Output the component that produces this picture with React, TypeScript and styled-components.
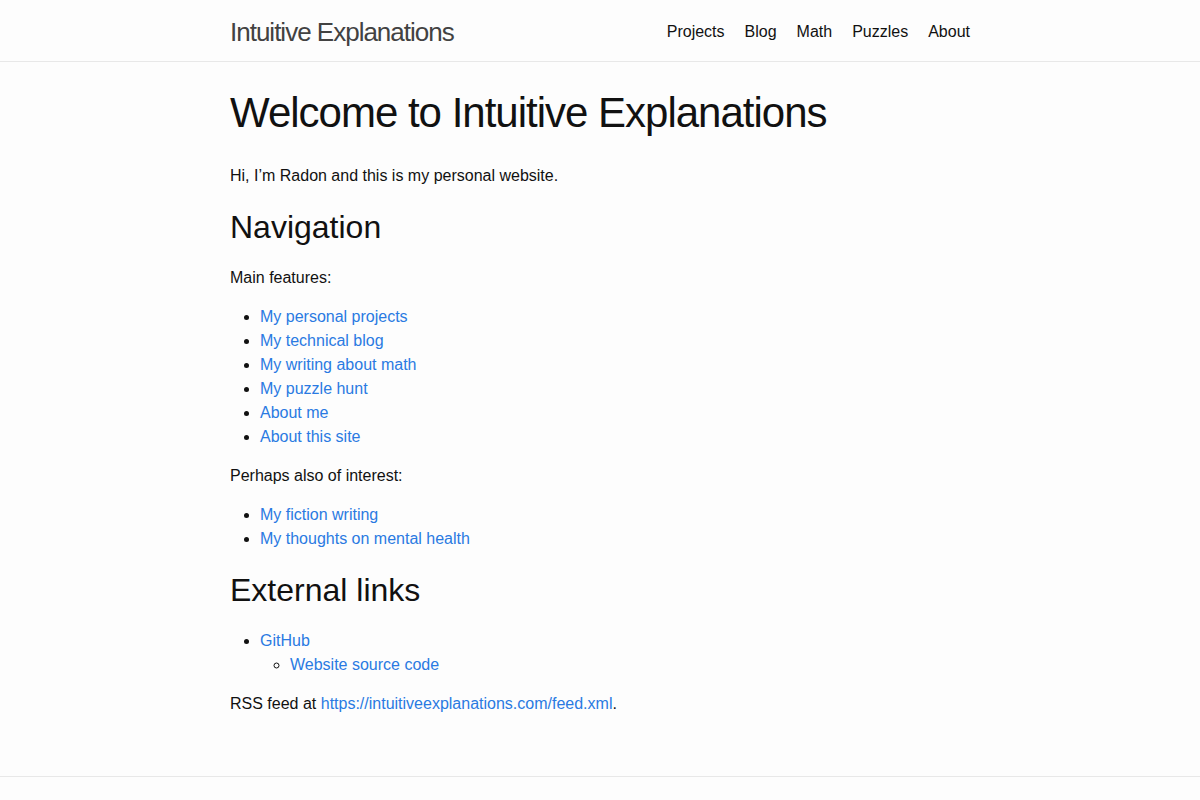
import React from "react";
import styled, { createGlobalStyle } from "styled-components";

const Global = createGlobalStyle`
  html, body { margin: 0; padding: 0; }
  body {
    background: #fdfdfd;
    color: #111;
    font-family: "Liberation Sans", Arial, Helvetica, sans-serif;
    font-size: 16px;
    font-weight: 400;
    line-height: 1.5;
  }
  #root { min-height: 100vh; display: flex; flex-direction: column; }
`;

const Page = styled.div`
  display: flex;
  flex-direction: column;
  min-height: 100vh;
`;

const Header = styled.header`
  border-bottom: 1px solid #e8e8e8;
  min-height: 61px;
`;

const Wrapper = styled.div`
  max-width: 740px;
  margin: 0 auto;
  padding: 0 30px;
`;

const HeaderBar = styled(Wrapper)`
  display: flex;
  justify-content: space-between;
  align-items: center;
  height: 59px;
  padding-top: 2px;
`;

const SiteTitle = styled.a`
  font-size: 26px;
  font-weight: 300;
  letter-spacing: -1px;
  color: #424242;
  text-decoration: none;
  line-height: 1.5;
  padding-top: 2px;
`;

const Nav = styled.nav`
  display: flex;
  gap: 20px;
`;

const NavLink = styled.a`
  color: #111;
  text-decoration: none;
  line-height: 1.5;
`;

const Main = styled.main`
  flex: 1;
  padding: 30px 0 45px;
`;

const Title = styled.h1`
  font-size: 42px;
  font-weight: 400;
  letter-spacing: -1px;
  line-height: 1;
  margin: 0 0 30px;
`;

const H2 = styled.h2`
  font-size: 32px;
  font-weight: 400;
  margin: 0 0 15px;
  line-height: 1.5;
`;

const P = styled.p`
  margin: 0 0 15px;
`;

const List = styled.ul<{ $nested?: boolean }>`
  margin: 0 0 ${(p) => (p.$nested ? "0" : "15px")} 30px;
  padding: 0;
  list-style-type: ${(p) => (p.$nested ? "circle" : "disc")};
`;

const Link = styled.a`
  color: #2a7ae2;
  text-decoration: none;
`;

const Footer = styled.footer`
  border-top: 1px solid #e8e8e8;
  padding: 30px 0;
`;

export default function App() {
  return (
    <>
      <Global />
      <Page>
        <Header>
          <HeaderBar>
            <SiteTitle href="#">Intuitive Explanations</SiteTitle>
            <Nav>
              <NavLink href="#">Projects</NavLink>
              <NavLink href="#">Blog</NavLink>
              <NavLink href="#">Math</NavLink>
              <NavLink href="#">Puzzles</NavLink>
              <NavLink href="#">About</NavLink>
            </Nav>
          </HeaderBar>
        </Header>
        <Main>
          <Wrapper>
            <Title>Welcome to Intuitive Explanations</Title>
            <P>Hi, I’m Radon and this is my personal website.</P>
            <H2>Navigation</H2>
            <P>Main features:</P>
            <List>
              <li><Link href="#">My personal projects</Link></li>
              <li><Link href="#">My technical blog</Link></li>
              <li><Link href="#">My writing about math</Link></li>
              <li><Link href="#">My puzzle hunt</Link></li>
              <li><Link href="#">About me</Link></li>
              <li><Link href="#">About this site</Link></li>
            </List>
            <P>Perhaps also of interest:</P>
            <List>
              <li><Link href="#">My fiction writing</Link></li>
              <li><Link href="#">My thoughts on mental health</Link></li>
            </List>
            <H2>External links</H2>
            <List>
              <li>
                <Link href="#">GitHub</Link>
                <List $nested>
                  <li><Link href="#">Website source code</Link></li>
                </List>
              </li>
            </List>
            <P>
              RSS feed at{" "}
              <Link href="#">https://intuitiveexplanations.com/feed.xml</Link>.
            </P>
          </Wrapper>
        </Main>
        <Footer>
          <Wrapper />
        </Footer>
      </Page>
    </>
  );
}
